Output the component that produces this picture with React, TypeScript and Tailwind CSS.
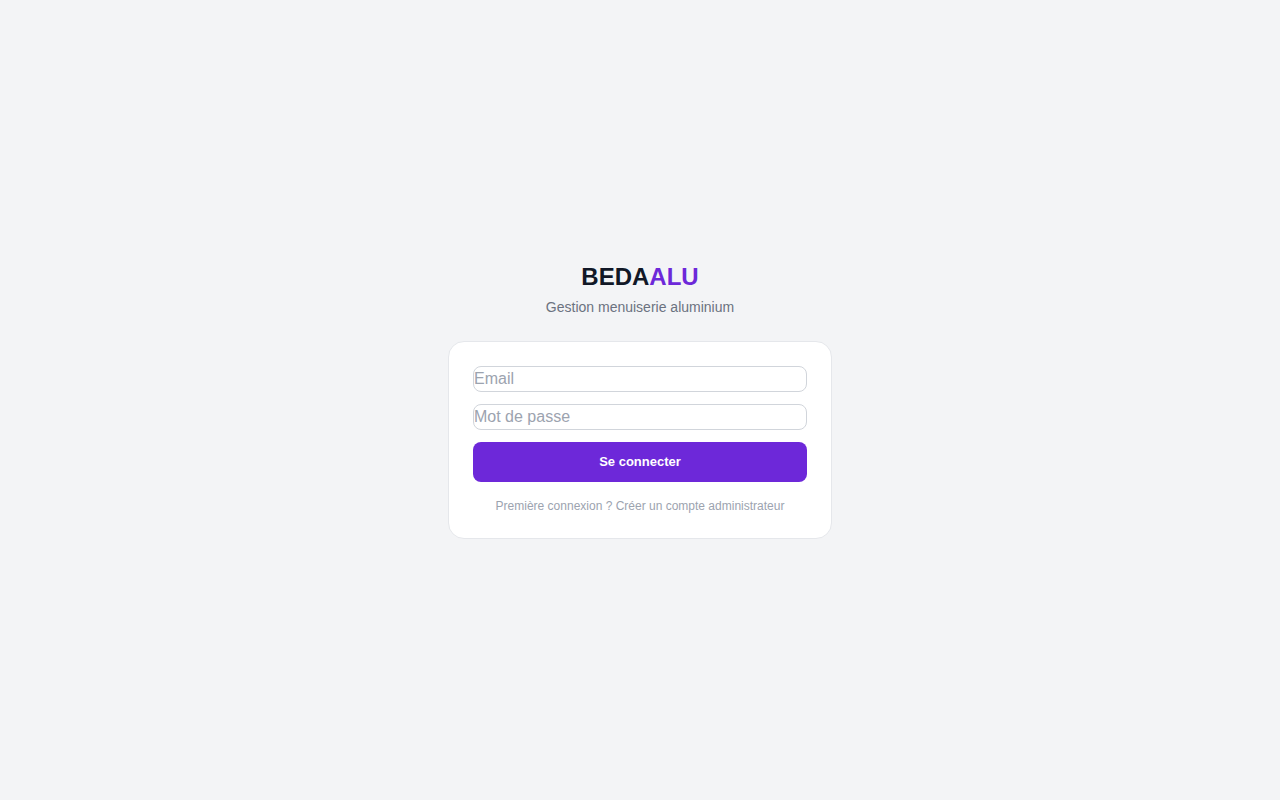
import React from 'react';

export default function App() {
  return (
    <div
      className="min-h-screen bg-[#f3f4f6] flex flex-col items-center justify-center"
      style={{ fontFamily: '"Liberation Sans", Arial, sans-serif' }}
    >
      <div className="text-center mb-6">
        <h1 className="text-2xl font-bold text-[#111827] leading-8">
          BEDA<span className="text-[#6d28d9]">ALU</span>
        </h1>
        <p className="mt-1 text-sm text-[#6b7280]">Gestion menuiserie aluminium</p>
      </div>

      <div className="w-96 bg-white border border-[#e5e7eb] rounded-2xl p-6">
        <form className="space-y-3" onSubmit={(e) => e.preventDefault()}>
          <input
            type="email"
            placeholder="Email"
            className="block w-full text-base leading-6 border border-[#d1d5db] rounded-lg placeholder:text-[#9ca3af] outline-none"
          />
          <input
            type="password"
            placeholder="Mot de passe"
            className="block w-full text-base leading-6 border border-[#d1d5db] rounded-lg placeholder:text-[#9ca3af] outline-none"
          />
          <button
            type="submit"
            className="w-full py-2.5 rounded-lg bg-[#6d28d9] text-white text-[13px] leading-5 font-bold"
          >
            Se connecter
          </button>
        </form>
        <p className="mt-4 text-center text-xs leading-4 text-[#9ca3af]">
          Première connexion ? Créer un compte administrateur
        </p>
      </div>
    </div>
  );
}
